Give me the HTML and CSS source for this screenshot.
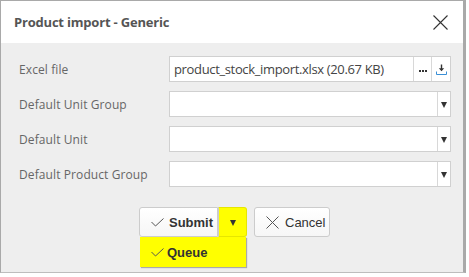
FILE: index.html
```html
<!DOCTYPE html>
<html lang="en">
<head>
  <meta charset="UTF-8" />
  <title>Product import - Generic</title>
  <link rel="stylesheet" href="styles.css">
</head>
<body>
  <div class="dialog">
    <div class="dialog-header">
      <span class="dialog-title">Product import - Generic</span>
      <svg class="close" width="15" height="15" viewBox="0 0 15 15">
        <path d="M0.5 0.5 L14.5 14.5 M14.5 0.5 L0.5 14.5" stroke="#333" stroke-width="1.1" fill="none"/>
      </svg>
    </div>

    <div class="dialog-body">
      <div class="row">
        <label>Excel file</label>
        <div class="field file-field">
          <span class="file-name">product_stock_import.xlsx (20.67 KB)</span>
          <span class="field-btn dots">
            <svg width="8" height="2" viewBox="0 0 8 2">
              <rect x="0" y="0" width="2" height="2" fill="#333"/>
              <rect x="3" y="0" width="2" height="2" fill="#333"/>
              <rect x="6" y="0" width="2" height="2" fill="#333"/>
            </svg>
          </span>
          <span class="field-btn">
            <svg width="11" height="11" viewBox="0 0 11 11">
              <path d="M5.5 0.5 V6" stroke="#333" stroke-width="1.4"/>
              <path d="M2.8 4.2 L5.5 7.2 L8.2 4.2 Z" fill="#333"/>
              <path d="M0.5 7.5 V10.5 H10.5 V7.5" stroke="#3a8fd6" stroke-width="1" fill="none"/>
            </svg>
          </span>
        </div>
      </div>
      <div class="row">
        <label>Default Unit Group</label>
        <div class="field select"><span class="arrow"></span></div>
      </div>
      <div class="row">
        <label>Default Unit</label>
        <div class="field select"><span class="arrow"></span></div>
      </div>
      <div class="row">
        <label>Default Product Group</label>
        <div class="field select"><span class="arrow"></span></div>
      </div>
    </div>

    <div class="dialog-footer">
      <div class="split">
        <button class="btn btn-main">
          <svg width="13" height="9" viewBox="0 0 13 9"><path d="M0.5 4 L4.5 8 L12.5 0.5" stroke="#555" stroke-width="1" fill="none"/></svg>
          Submit
        </button>
        <button class="btn btn-toggle"><span class="arrow"></span></button>
        <div class="menu">
          <div class="menu-item">
            <svg width="13" height="9" viewBox="0 0 13 9"><path d="M0.5 4 L4.5 8 L12.5 0.5" stroke="#555" stroke-width="1" fill="none"/></svg>
            Queue
          </div>
        </div>
      </div>
      <button class="btn btn-cancel">
        <svg width="13" height="13" viewBox="0 0 13 13"><path d="M0.5 0.5 L12.5 12.5 M12.5 0.5 L0.5 12.5" stroke="#555" stroke-width="1" fill="none"/></svg>
        Cancel
      </button>
    </div>
  </div>
</body>
</html>
```

FILE: styles.css
```css
body {
  margin: 0;
  background: #fff;
  font-family: 'Open Sans', sans-serif;
}

.dialog {
  width: 466px;
  height: 273px;
  border-top: 1px solid #a9a9a9;
  border-left: 1px solid #a9a9a9;
  border-right: 3px solid #a9a9a9;
  border-bottom: 1px solid #bdbdbd;
  background: #eee;
  box-sizing: border-box;
}

.dialog-header {
  height: 42px;
  background: #fff;
  display: flex;
  align-items: center;
  justify-content: space-between;
  padding: 0 15px 0 13px;
}
.dialog-title {
  font-family: 'Open Sans', sans-serif;
  font-weight: 700;
  font-size: 13px;
  color: #555;
  letter-spacing: -0.2px;
}
.close { margin-top: 1px; }

.dialog-body {
  padding: 13px 12px 0 18px;
  display: flex;
  flex-direction: column;
  gap: 9px;
}

.row {
  display: flex;
  align-items: center;
  height: 26px;
}
.row label {
  width: 150px;
  font-size: 12px;
  color: #666;
  letter-spacing: 0.1px;
}

.field {
  flex: 1;
  height: 26px;
  background: #fff;
  border: 1px solid #d0d0d0;
  box-sizing: border-box;
  display: flex;
  align-items: stretch;
}

.file-name {
  flex: 1;
  padding-left: 4px;
  font-size: 13px;
  color: #444;
  line-height: 24px;
  letter-spacing: -0.35px;
  white-space: nowrap;
  overflow: hidden;
}
.field-btn {
  width: 18px;
  border-left: 1px solid #d8d8d8;
  display: flex;
  align-items: center;
  justify-content: center;
}
.field-btn.dots { align-items: flex-end; padding-bottom: 9px; box-sizing: border-box; }

.select { justify-content: flex-end; }
.select .arrow {
  width: 12px;
  border-left: 1px solid #d8d8d8;
  position: relative;
}
.arrow::after {
  content: "";
  position: absolute;
  left: 50%;
  top: 50%;
  margin-left: -3px;
  margin-top: -2px;
  border-left: 3.5px solid transparent;
  border-right: 3.5px solid transparent;
  border-top: 6px solid #333;
}

.dialog-footer {
  display: flex;
  gap: 7px;
  padding: 20px 0 0 138px;
}

.split {
  display: flex;
  position: relative;
}

.btn {
  height: 30px;
  border: 1px solid #ccc;
  background: linear-gradient(#fff, #f6f6f6);
  font-family: 'Liberation Sans', Arial, sans-serif;
  font-size: 13px;
  color: #333;
  display: flex;
  align-items: center;
  gap: 6px;
  box-sizing: border-box;
  padding: 0;
}
.btn-main {
  width: 79px;
  border-radius: 3px 0 0 3px;
  font-weight: 700;
  padding-left: 11px;
  gap: 5px;
}
.btn-toggle {
  width: 29px;
  background: #ffff00;
  border-color: #e6e600;
  border-left-color: #ccc;
  border-radius: 0 3px 3px 0;
  position: relative;
}

.btn-cancel {
  width: 76px;
  border-radius: 3px;
  padding-left: 11px;
}

.menu {
  position: absolute;
  top: 30px;
  left: 1px;
  width: 106px;
  height: 30px;
  background: #ffff00;
  box-shadow: 1px 1px 1px #aaa;
}
.menu-item {
  display: flex;
  align-items: center;
  gap: 3px;
  height: 30px;
  padding-left: 11px;
  font-family: 'Liberation Sans', Arial, sans-serif;
  font-weight: 700;
  font-size: 13px;
  color: #333;
}
```
